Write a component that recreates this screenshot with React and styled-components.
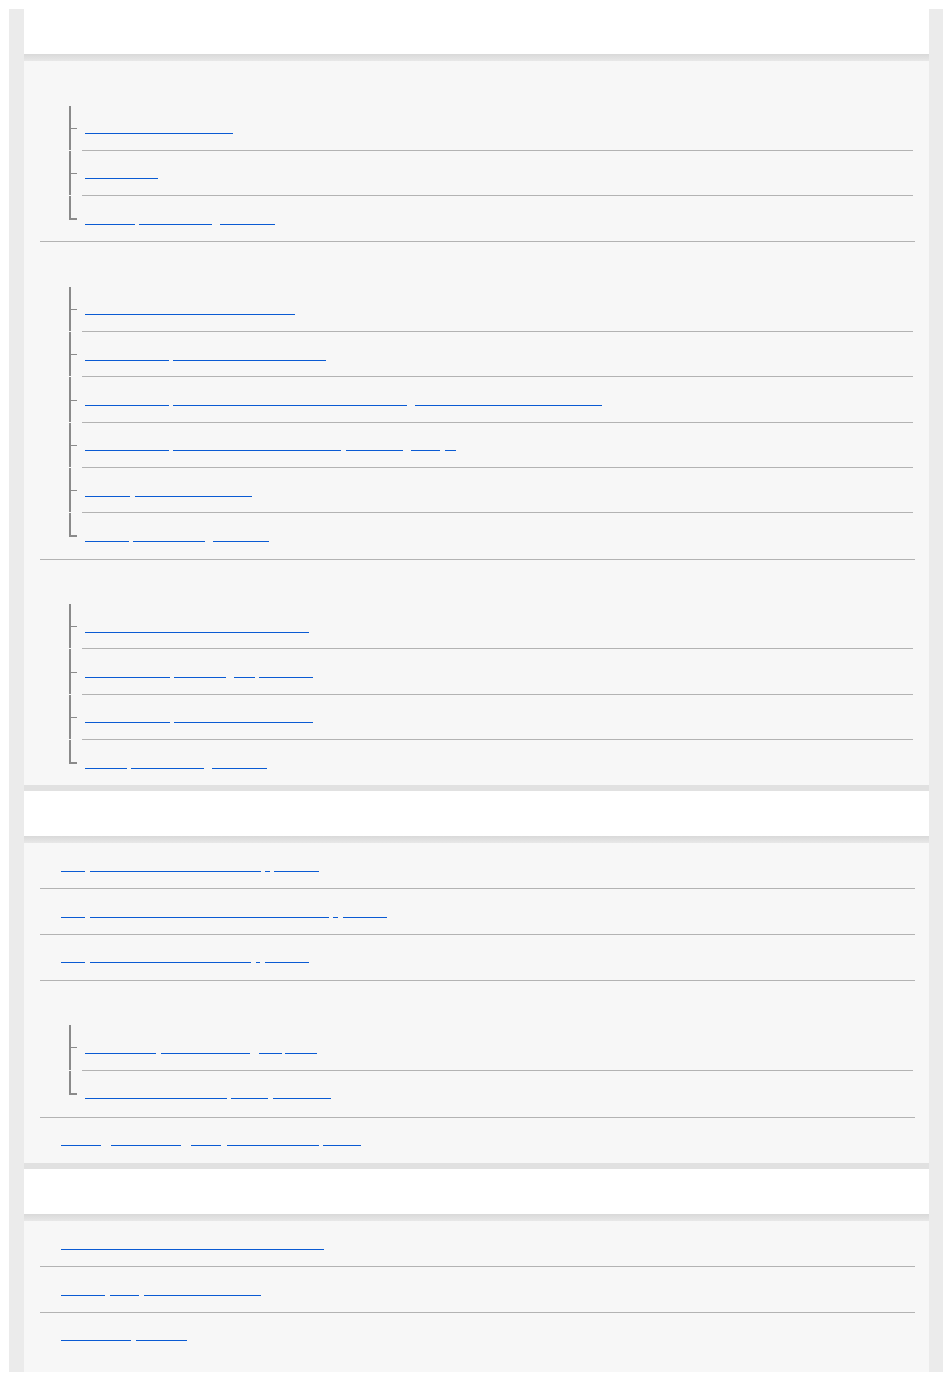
import React from "react";
import styled, { createGlobalStyle } from "styled-components";

const GlobalStyle = createGlobalStyle`
  html, body { margin: 0; padding: 0; background: #fff; }
  body { font-family: "Liberation Sans", Arial, sans-serif; }
`;

const Page = styled.main`
  width: 934px;
  margin: 9px 0 0 9px;
  padding: 0 14px 0 15px;
  box-sizing: border-box;
  background: #ebebeb;
`;

const Section = styled.section`
  & + & {
    border-top: 6px solid #e1e1e1;
  }
`;

const Header = styled.h2`
  margin: 0;
  height: 52px;
  box-sizing: border-box;
  padding: 0 16px 7px;
  background: linear-gradient(to bottom, #fff 45px, #d9d9d9 45px, #e8e8e8 52px);
  font-size: 17px;
  font-weight: bold;
  line-height: 45px;
  color: transparent;
  white-space: nowrap;
  overflow: hidden;
`;

const Panel = styled.div`
  --pitch: ${(p) => p.$pitch}px;
  background: #f7f7f7;
  padding: 0 14px ${(p) => p.$padBottom || 0}px 16px;
`;

const Row = styled.div`
  height: var(--pitch);
  box-sizing: border-box;
  padding-left: 21px;
  border-bottom: 1px solid #b3b3b3;
  &:last-child {
    border-bottom: none;
  }
`;

const Category = styled.div`
  border-bottom: 1px solid #b3b3b3;
  &:last-child {
    border-bottom: none;
  }
`;

const CatHeading = styled.h3`
  margin: 0;
  height: 44.5px;
  padding-left: 21px;
  font-size: 15px;
  font-weight: bold;
  line-height: 44.5px;
  color: transparent;
  white-space: nowrap;
  overflow: hidden;
`;

const TreeList = styled.ul`
  list-style: none;
  margin: 0 2px 0 42px;
  padding: 0;
`;

const TreeItem = styled.li`
  position: relative;
  height: var(--pitch);
  box-sizing: border-box;
  padding-left: 3px;
  border-bottom: 1px solid #b3b3b3;

  &::before {
    content: "";
    position: absolute;
    left: -13px;
    top: 0;
    bottom: 0;
    border-left: 2px solid #8a8a8a;
  }
  &::after {
    content: "";
    position: absolute;
    left: -11px;
    top: 50%;
    width: 6px;
    height: 1px;
    background: #8a8a8a;
  }
  &:last-child {
    border-bottom: none;
  }
  &:last-child::before {
    bottom: auto;
    height: calc(50% + 1px);
    width: 8px;
    box-sizing: border-box;
    border-bottom: 2px solid #8a8a8a;
  }
  &:last-child::after {
    display: none;
  }
`;

const Link = styled.a`
  display: flex;
  align-items: flex-end;
  height: 28.5px;
  text-decoration: none;
  cursor: pointer;
`;

const Seg = styled.span.attrs((p) => ({
  style: { width: `${p.$w}px`, marginLeft: `${p.$gap}px` },
}))`
  display: block;
  flex: none;
  height: 16px;
  overflow: hidden;
  white-space: nowrap;
  font-size: 10px;
  line-height: 15px;
  color: transparent;
  border-bottom: 1px solid #0a5bd3;
`;

const sections = [
  {
    title: "Getting started",
    pitch: 45.3,
    items: [
      {
        heading: "Before use",
        children: [
          [["Documentation", 0, 147.5]],
          [["Accessories", 0, 72.7]],
          [["About", 0, 50], ["Bluetooth", 4, 72.7], ["function", 8.3, 55]],
        ],
      },
      {
        heading: "Parts and controls",
        children: [
          [["Location and function of parts", 0, 210]],
          [["Checking", 0, 84.3], ["package contents", 4, 152.7]],
          [["Checking", 0, 84.3], ["the indicator lamp behaviour", 4, 233.4], ["when charging the battery", 8.3, 186.7]],
          [["Checking", 0, 84.3], ["the remaining battery", 4, 167.7], ["level", 5, 57.3], ["of", 8, 28.7], ["a", 5.3, 11]],
          [["Using", 0, 44.7], ["the touch sensor", 5.3, 117]],
          [["About", 0, 43.7], ["voice", 4.3, 72], ["guidance", 8.3, 55.4]],
        ],
      },
      {
        heading: "Power/Charging",
        children: [
          [["Charging the headset battery", 0, 224]],
          [["Available", 0, 85], ["usage", 4, 52.3], ["of", 7.4, 21.3], ["power", 3.7, 54.3]],
          [["Available", 0, 85], ["charging accessories", 4, 138.7]],
          [["Power", 0, 42], ["on the", 4, 73], ["headset", 8, 55]],
        ],
      },
    ],
  },
  {
    title: "Making connections",
    pitch: 45.75,
    items: [
      { link: [["1.", 0, 24.3], ["Pairing with an Android phone", 4.7, 170.7], ["·", 4.3, 4.7], ["device", 4.3, 44.7]] },
      { link: [["2.", 0, 24.3], ["Pairing and connecting with an iPhone", 4.7, 238.7], ["·", 4.3, 5], ["device", 5, 43.7]] },
      { link: [["3.", 0, 24.3], ["Connecting with a computer", 4.7, 161], ["·", 5, 4], ["device", 5, 44]] },
      {
        heading: "Multipoint connection",
        children: [
          [["Connecting", 0, 70.7], ["the headset to", 5, 89.7], ["two", 8.3, 23], ["units", 3.7, 31.3]],
          [["Connecting the headset", 0, 142], ["to a", 4, 37.4], ["computer", 4.6, 58]],
        ],
      },
      { link: [["Ending", 0, 40], ["Bluetooth", 10, 70], ["after", 10, 30], ["using headset", 6.3, 91.7], ["device", 4.3, 37.7]] },
    ],
  },
  {
    title: "Listening to music",
    pitch: 45.75,
    padBottom: 13.5,
    items: [
      { link: [["Listening to music via a Bluetooth connection", 0, 263]] },
      { link: [["Noise", 0, 44], ["the", 5, 29], ["noise canceling", 5, 117]] },
      { link: [["Ambient", 0, 70.3], ["Sound", 4.7, 51]] },
    ],
  },
];

function LinkText({ segs }) {
  return (
    <Link href="#" onClick={(e) => e.preventDefault()}>
      {segs.map(([word, gap, w], i) => (
        <Seg key={i} $w={w} $gap={gap}>
          {word}
        </Seg>
      ))}
    </Link>
  );
}

export default function App() {
  return (
    <>
      <GlobalStyle />
      <Page>
        {sections.map((s, si) => (
          <Section key={si}>
            <Header>{s.title}</Header>
            <Panel $pitch={s.pitch} $padBottom={s.padBottom}>
              {s.items.map((it, ii) =>
                it.link ? (
                  <Row key={ii}>
                    <LinkText segs={it.link} />
                  </Row>
                ) : (
                  <Category key={ii}>
                    <CatHeading>{it.heading}</CatHeading>
                    <TreeList>
                      {it.children.map((c, ci) => (
                        <TreeItem key={ci}>
                          <LinkText segs={c} />
                        </TreeItem>
                      ))}
                    </TreeList>
                  </Category>
                )
              )}
            </Panel>
          </Section>
        ))}
      </Page>
    </>
  );
}
